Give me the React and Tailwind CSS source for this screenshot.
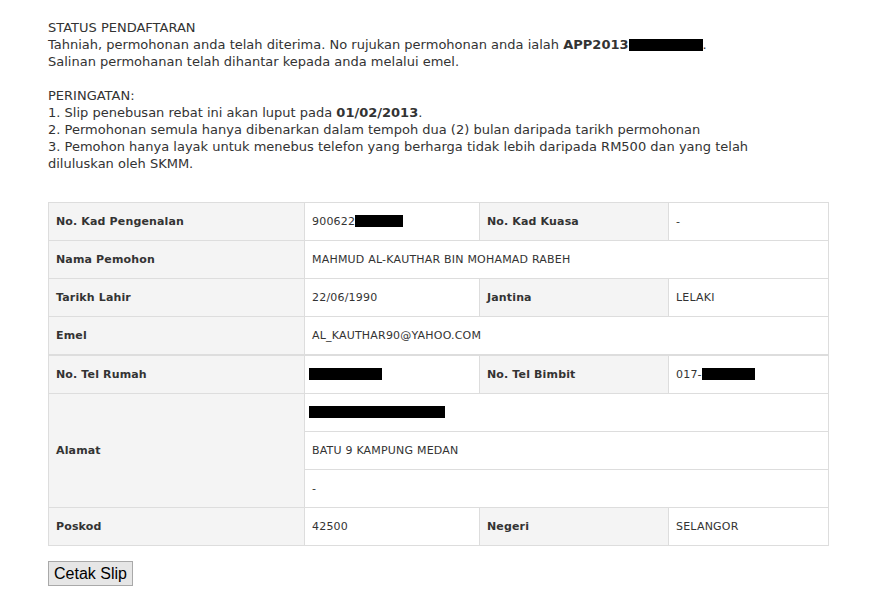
import React from "react";

const Box = ({ w }) => (
  <span className="inline-block h-[12px] bg-black align-[-2px]" style={{ width: w }} />
);

const L = "border border-[#dddddd] bg-[#f4f4f4] px-[7px] font-bold text-[#333] tracking-[0.15px]";
const V = "border border-[#dddddd] bg-white px-[7px] text-[#333] tracking-[0.2px]";

function Cols() {
  return (
    <colgroup>
      <col className="w-[256px]" />
      <col className="w-[175px]" />
      <col className="w-[189px]" />
      <col className="w-[160px]" />
    </colgroup>
  );
}

export default function App() {
  return (
    <div className="min-h-[598px] w-[881px] bg-white pl-[48px] pt-[19px]">
      <div
        className="whitespace-nowrap text-[13px] leading-[17px] text-[#333]"
        style={{ fontFamily: '"DejaVu Sans", Verdana, sans-serif' }}
      >
        <div>STATUS PENDAFTARAN</div>
        <div>
          Tahniah, permohonan anda telah diterima. No rujukan permohonan anda ialah{" "}
          <b>APP2013</b>
          <Box w={74} />.
        </div>
        <div>Salinan permohanan telah dihantar kepada anda melalui emel.</div>
        <div className="h-[17px]" />
        <div>PERINGATAN:</div>
        <div>
          1. Slip penebusan rebat ini akan luput pada <b>01/02/2013</b>.
        </div>
        <div>2. Permohonan semula hanya dibenarkan dalam tempoh dua (2) bulan daripada tarikh permohonan</div>
        <div>3. Pemohon hanya layak untuk menebus telefon yang berharga tidak lebih daripada RM500 dan yang telah</div>
        <div>diluluskan oleh SKMM.</div>
      </div>

      <div
        className="mt-[30px] w-[780px] text-[11px] leading-[13px]"
        style={{ fontFamily: '"DejaVu Sans", Verdana, sans-serif' }}
      >
        <table className="w-[780px] table-fixed border-collapse border border-[#dddddd]">
          <Cols />
          <tbody>
            <tr className="h-[38px]">
              <td className={L}>No. Kad Pengenalan</td>
              <td className={V}>
                900622
                <Box w={48} />
              </td>
              <td className={L}>No. Kad Kuasa</td>
              <td className={V}>-</td>
            </tr>
            <tr className="h-[38px]">
              <td className={L}>Nama Pemohon</td>
              <td className={V} colSpan={3}>
                MAHMUD AL-KAUTHAR BIN MOHAMAD RABEH
              </td>
            </tr>
            <tr className="h-[38px]">
              <td className={L}>Tarikh Lahir</td>
              <td className={V}>22/06/1990</td>
              <td className={L}>Jantina</td>
              <td className={V}>LELAKI</td>
            </tr>
            <tr className="h-[38px]">
              <td className={L}>Emel</td>
              <td className={V} colSpan={3}>
                AL_KAUTHAR90@YAHOO.COM
              </td>
            </tr>
          </tbody>
        </table>
        <table className="w-[780px] table-fixed border-collapse border border-[#dddddd]">
          <Cols />
          <tbody>
            <tr className="h-[38px]">
              <td className={L}>No. Tel Rumah</td>
              <td className={V + " pl-[4px]"}>
                <Box w={73} />
              </td>
              <td className={L}>No. Tel Bimbit</td>
              <td className={V}>
                017-
                <Box w={53} />
              </td>
            </tr>
            <tr className="h-[38px]">
              <td className={L} rowSpan={3}>
                Alamat
              </td>
              <td className={V + " pl-[4px]"} colSpan={3}>
                <Box w={136} />
              </td>
            </tr>
            <tr className="h-[38px]">
              <td className={V} colSpan={3}>
                BATU 9 KAMPUNG MEDAN
              </td>
            </tr>
            <tr className="h-[38px]">
              <td className={V} colSpan={3}>
                -
              </td>
            </tr>
            <tr className="h-[38px]">
              <td className={L}>Poskod</td>
              <td className={V}>42500</td>
              <td className={L}>Negeri</td>
              <td className={V}>SELANGOR</td>
            </tr>
          </tbody>
        </table>
      </div>

      <button
        className="mt-[15px] h-[25px] w-[85px] border border-[#a9a9a9] bg-[#e6e6e6] p-0 text-[16px] leading-[18px] text-black"
        style={{ fontFamily: '"Liberation Sans", Arial, sans-serif' }}
      >
        Cetak Slip
      </button>
    </div>
  );
}
